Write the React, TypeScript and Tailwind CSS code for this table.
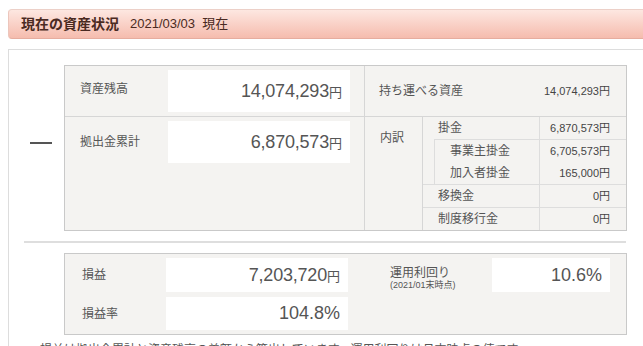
import React from 'react';

const font = "font-['Liberation_Sans','Noto_Sans_CJK_JP',sans-serif]";

function BigValue({ value, unit }: { value: string; unit: string }) {
  return (
    <div className="flex items-baseline justify-end">
      <span className="text-[18px] text-[#555] tracking-[-0.2px]">{value}</span>
      <span className="text-[13px] text-[#555]">{unit}</span>
    </div>
  );
}

function SubRow({ label, value, className = '' }: { label: string; value: string; className?: string }) {
  return (
    <div className={`flex ${className}`}>
      <div className="flex-1 flex items-center pl-[15px] text-[12px] text-[#555]">{label}</div>
      <div className="w-[87px] border-l border-[#ddd] flex items-center justify-end pr-[16px] text-[11px] text-[#444]">
        {value}
      </div>
    </div>
  );
}

export default function App() {
  return (
    <div className={`w-[643px] h-[346px] overflow-hidden bg-white ${font}`}>
      {/* header */}
      <div className="ml-2 mt-[9px] h-[30px] flex items-center pl-[12px] rounded-l-[4px] border border-r-0 border-t-[#ecd0c8] border-l-[#ecc6bc] border-b-[#e6ad9f] bg-gradient-to-b from-[#fde7e1] to-[#f5bcae]">
        <h2 className="text-[14px] font-bold text-[#4a2a22]">現在の資産状況</h2>
        <span className="ml-[11px] text-[13px] text-[#4a2a22]">2021/03/03 &nbsp;現在</span>
      </div>

      {/* content */}
      <div className="ml-2 mt-[10px] border-t border-l border-[#ddd] pt-[15px]">
        <div className="flex">
          <div className="w-[55px] pt-[77px]">
            <div className="ml-[21px] w-[22px] h-[2px] bg-[#555]" />
          </div>

          <div className="flex w-[563px] border border-[#c9c9c9] bg-[#f4f3f1]">
            {/* left */}
            <div className="w-[300px] border-r border-[#d6d6d6]">
              <div className="h-[51px] flex border-b border-[#d6d6d6]">
                <div className="w-[103px] h-[46px] flex items-center pl-[15px] text-[12px] text-[#555]">資産残高</div>
                <div className="mt-[4px] w-[182px] h-[42px] bg-white flex items-center justify-end pr-[8px]">
                  <BigValue value="14,074,293" unit="円" />
                </div>
              </div>
              <div className="h-[113px] flex items-start">
                <div className="w-[103px] h-[50px] flex items-center pl-[15px] text-[12px] text-[#555]">拠出金累計</div>
                <div className="mt-[4px] w-[182px] h-[42px] bg-white flex items-center justify-end pr-[8px]">
                  <BigValue value="6,870,573" unit="円" />
                </div>
              </div>
            </div>

            {/* right */}
            <div className="flex-1">
              <div className="h-[51px] flex items-center justify-between border-b border-[#d6d6d6] pl-[14px] pr-[16px]">
                <span className="text-[12px] text-[#555]">持ち運べる資産</span>
                <span className="text-[11px] text-[#444]">14,074,293円</span>
              </div>
              <div className="flex h-[113px]">
                <div className="w-[58px] border-r border-[#d6d6d6] pl-[15px] pt-[12px] text-[12px] text-[#555]">内訳</div>
                <div className="flex-1 flex flex-col">
                  <SubRow label="掛金" value="6,870,573円" className="h-[22px]" />
                  <div className="flex">
                    <div className="w-[11px]" />
                    <div className="flex-1 border-t border-l border-[#ddd]">
                      <SubRow label="事業主掛金" value="6,705,573円" className="h-[22px]" />
                      <SubRow label="加入者掛金" value="165,000円" className="h-[22px]" />
                    </div>
                  </div>
                  <SubRow label="移換金" value="0円" className="h-[23px] border-t border-[#ddd]" />
                  <SubRow label="制度移行金" value="0円" className="flex-1 border-t border-[#ddd]" />
                </div>
              </div>
            </div>
          </div>
        </div>

        <div className="ml-[15px] mt-[10px] w-[602px] h-[2px] bg-[#dedede]" />

        <div className="ml-[55px] mt-[10px] flex w-[563px] h-[82px] border border-[#c9c9c9] bg-[#f4f3f1]">
          <div className="w-[283px] pt-[4px] flex flex-col gap-[5px]">
            <div className="flex h-[34px]">
              <div className="w-[101px] flex items-center pl-[17px] text-[12px] text-[#555]">損益</div>
              <div className="w-[182px] bg-white flex items-center justify-end pr-[8px]">
                <BigValue value="7,203,720" unit="円" />
              </div>
            </div>
            <div className="flex h-[33px]">
              <div className="w-[101px] flex items-center pl-[17px] text-[12px] text-[#555]">損益率</div>
              <div className="w-[182px] bg-white flex items-center justify-end pr-[8px]">
                <span className="text-[18px] text-[#555]">104.8%</span>
              </div>
            </div>
          </div>
          <div className="flex pt-[4px]">
            <div className="w-[144px] pl-[42px] pt-[9px] leading-none">
              <div className="text-[12px] text-[#555]">運用利回り</div>
              <div className="mt-[2px] text-[9px] text-[#555]">(2021/01末時点)</div>
            </div>
            <div className="w-[118px] h-[34px] bg-white flex items-center justify-end pr-[8px]">
              <span className="text-[18px] text-[#555]">10.6%</span>
            </div>
          </div>
        </div>

        <p className="ml-[31px] mt-[6px] text-[12px] text-[#555] whitespace-nowrap">
          損益は拠出金累計と資産残高の差額から算出しています。運用利回りは月末時点の値です。
        </p>
      </div>
    </div>
  );
}
